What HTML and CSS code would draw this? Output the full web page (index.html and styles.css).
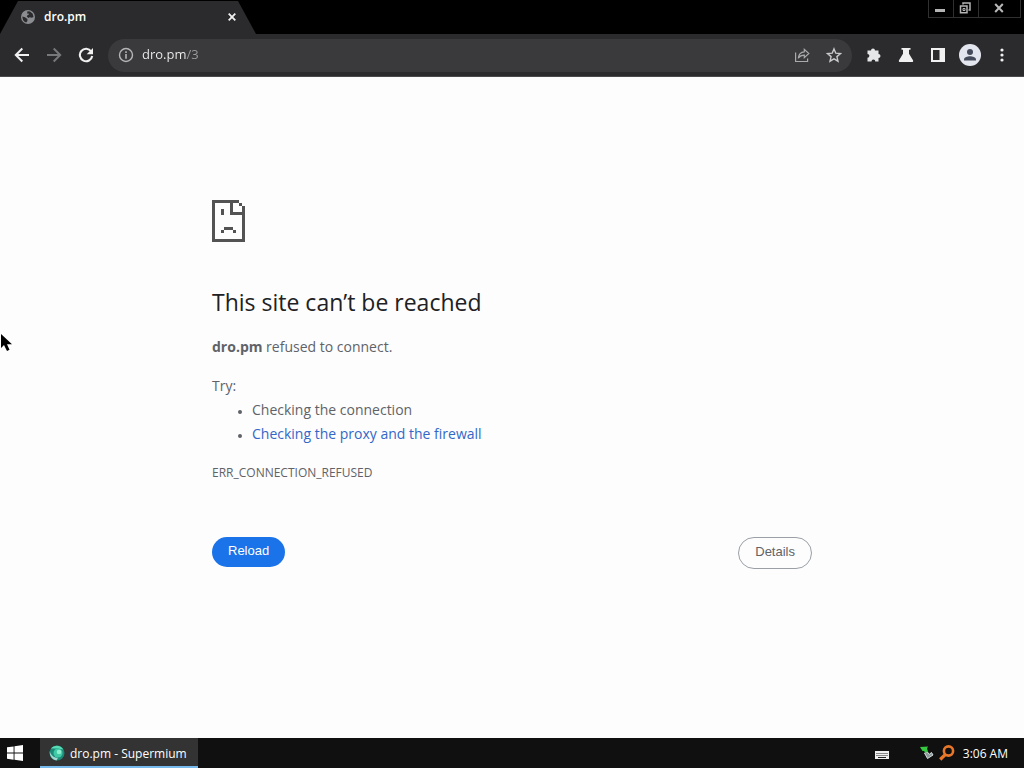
FILE: index.html
```html
<!DOCTYPE html>
<html lang="en">
<head>
    <meta charset="UTF-8">
    <meta name="viewport" content="width=device-width, initial-scale=1.0">
    <title>dro.pm</title>
    <link rel="stylesheet" href="styles.css">
</head>
<body>
    <header class="browser">
        <div class="tab-strip">
            <div class="tab">
                <svg class="tab-icon" width="16" height="16" viewBox="0 0 16 16">
                    <circle cx="8" cy="8" r="7" fill="#8b8d90"/>
                    <path d="M2.4 7.6 5 8.2 7.4 10v2l-1.2 1.6C3.8 13 2.2 10.600 2.400 7.600zM7.500 2.200l2.500.3 2.700 2.200.8 3.300-1.700.8-2-.6L8.400 9 6.800 7.600l.3-1.200 1.600-.6V4.500H7z" fill="#2b2b2d"/>
                </svg>
                <span class="tab-title">dro.pm</span>
                <button class="tab-close" aria-label="Close tab">
                    <svg width="8" height="8" viewBox="0 0 8 8"><path d="M.7.7l6.600 6.600M7.300.7.7 7.300" stroke="#f1f1f1" stroke-width="1.800"/></svg>
                </button>
            </div>
            <div class="window-buttons">
                <button class="window-button" aria-label="Minimize">
                    <svg width="12" height="12" viewBox="0 0 12 12"><path d="M1 7h10v3H1z" fill="#b4b4b4"/></svg>
                </button>
                <button class="window-button" aria-label="Restore">
                    <svg width="12" height="12" viewBox="0 0 12 12" fill="none" stroke="#b4b4b4" stroke-width="1.500"><path d="M4 2.500V1h7v7H9.500"/><path d="M1.500 4h6.500v6.800H1.500z"/><path d="M4 6.500h2v2H4z" stroke-width="1"/></svg>
                </button>
                <button class="window-button window-button-close" aria-label="Close">
                    <svg width="10" height="10" viewBox="0 0 10 10"><path d="M1.200 1l7.600 8M8.800 1 1.200 9" stroke="#b8b8b8" stroke-width="2"/></svg>
                </button>
            </div>
        </div>

        <div class="toolbar">
            <button class="tool" aria-label="Back">
                <svg width="16" height="16" viewBox="0 0 16 16" fill="none" stroke="#f1f1f1" stroke-width="2"><path d="M15 8H2.500M8.300 1.500 1.800 8l6.500 6.500"/></svg>
            </button>
            <button class="tool" aria-label="Forward" disabled>
                <svg width="16" height="16" viewBox="0 0 16 16" fill="none" stroke="#77787a" stroke-width="2"><path d="M1 8h12.500M7.700 1.500 14.200 8l-6.500 6.500"/></svg>
            </button>
            <button class="tool" aria-label="Reload page">
                <svg width="16" height="16" viewBox="0 0 16 16"><path d="M13.200 4.500A6.200 6.200 0 1 0 14.200 9" fill="none" stroke="#f1f1f1" stroke-width="2.100"/><path d="M15 1v6.300H8.700z" fill="#f1f1f1"/></svg>
            </button>
            <form class="address-bar">
                <button type="button" class="site-info" aria-label="View site information">
                    <svg width="16" height="16" viewBox="0 0 16 16"><circle cx="8" cy="8" r="6.500" fill="none" stroke="#b4b5b8" stroke-width="1.400"/><path d="M7.200 4.300h1.600v1.600H7.200zM7.200 7h1.600v4.700H7.200z" fill="#b4b5b8"/></svg>
                </button>
                <input class="address" type="text" value="dro.pm/3" aria-label="Address" spellcheck="false">
                <button type="button" class="tool" aria-label="Share">
                    <svg width="16" height="16" viewBox="0 0 16 16" fill="none" stroke="#a9aaad" stroke-width="1.200"><path d="M1.600 5.500v9h12v-3"/><path d="M4.200 11.200C4.700 7.200 7 5 10.300 4.800V2.300l4.500 4.200-4.500 4.100V8.200C7.400 8.200 5.600 9.200 4.200 11.200z"/></svg>
                </button>
                <button type="button" class="tool" aria-label="Bookmark">
                    <svg width="16" height="16" viewBox="0 0 16 16"><path d="M8 1.900l1.800 4.300 4.700.4-3.600 3 1.100 4.600L8 11.800l-4 2.400 1.100-4.600-3.600-3 4.700-.4z" fill="none" stroke="#c9cacc" stroke-width="1.400"/></svg>
                </button>
            </form>
            <button class="tool" aria-label="Extensions">
                <svg width="16" height="16" viewBox="0 0 16 16"><path d="M1.500 3.500H5a2 2 0 1 1 4 0h3.500V7a2 2 0 1 1 0 4v3.500H9.300a1.900 1.900 0 0 0-3.800 0h-4v-3.800a1.900 1.900 0 0 0 0-3.800z" fill="#e6e7e9"/></svg>
            </button>
            <button class="tool" aria-label="Labs">
                <svg width="16" height="16" viewBox="0 0 16 16"><path d="M3.500 1h9v1.800H11v4l4 6.400c.5.900 0 1.800-1 1.800H2c-1 0-1.500-.9-1-1.800l4-6.400v-4H3.500z" fill="#f1f1f1"/></svg>
            </button>
            <button class="tool" aria-label="Side panel">
                <svg width="16" height="16" viewBox="0 0 16 16"><path d="M1 1h14v14H1zM3 3v10h6.500V3z" fill="#f1f1f1" fill-rule="evenodd"/></svg>
            </button>
            <button class="tool" aria-label="Profile">
                <svg width="22" height="22" viewBox="0 0 22 22"><circle cx="11" cy="11" r="11" fill="#e3e6ee"/><circle cx="11" cy="8" r="3" fill="#454b5a"/><path d="M5 16.500v-1c0-2.200 3.500-3.300 6-3.300s6 1.100 6 3.300v1z" fill="#454b5a"/></svg>
            </button>
            <button class="tool" aria-label="Menu">
                <svg width="16" height="16" viewBox="0 0 16 16" fill="#f1f1f1"><circle cx="8" cy="3" r="1.600"/><circle cx="8" cy="8" r="1.600"/><circle cx="8" cy="13" r="1.600"/></svg>
            </button>
        </div>
    </header>

    <main class="page">
        <div class="error">
            <svg class="error-icon" width="33" height="42" viewBox="0 0 11 14" shape-rendering="crispEdges">
                <path d="M0 0h9v1H7v3h3v1H6V1H1v12h9V2h1v12H0zM9 1h1v1H9zM3 3h1v2H3zM4 9h3v1H4zM3 10h1v1H3zM7 10h1v1H7z" fill="#535353"/>
            </svg>
            <h1>This site can’t be reached</h1>
            <p><strong>dro.pm</strong> refused to connect.</p>
            <div class="suggestions">
                <p>Try:</p>
                <ul>
                    <li>Checking the connection</li>
                    <li><a href="#buttons">Checking the proxy and the firewall</a></li>
                </ul>
            </div>
            <div class="error-code">ERR_CONNECTION_REFUSED</div>
            <div class="buttons" id="buttons">
                <button class="reload-button">Reload</button>
                <button class="details-button">Details</button>
            </div>
        </div>
    </main>

    <footer class="taskbar">
        <button class="start" aria-label="Start">
            <svg width="16" height="16" viewBox="0 0 16 16" fill="#fff"><path d="M0 2.300 6.600 1.400v6.200H0zM7.500 1.200 16 0v7.600H7.500zM0 8.500h6.600v6.200L0 13.800zM7.500 8.500H16V16l-8.500-1.200z"/></svg>
        </button>
        <button class="task">
            <svg width="16" height="16" viewBox="0 0 16 16"><circle cx="8" cy="8" r="7.500" fill="#1c8a79"/><path d="M2 3.500C5-.5 12-.3 14.300 4.500L9 3.500z" fill="#58dcb4"/><circle cx="9" cy="8" r="4.500" fill="#3fc9a4"/><circle cx="10" cy="7" r="2.300" fill="#8ff0cf"/><path d="M.8 6c.7 4 4 7 8.200 6.800l-1.500 2.600C3.500 15 .3 11 .8 6z" fill="#a5d8cf"/></svg>
            <span>dro.pm - Supermium</span>
        </button>
        <div class="tray">
            <svg class="keyboard" width="14" height="8" viewBox="0 0 14 8"><path d="M0 0h14v8H0z" fill="#eee"/><path d="M1.500 2.500h11M1.500 4.500h11" stroke="#222" stroke-dasharray="1 1"/><path d="M3 6.500h8" stroke="#222"/></svg>
            <svg width="14" height="14" viewBox="0 0 14 14"><path d="M4.500 7 7.500 12.500 13 9l-1.500-2.500L9 8.500 7.500 6z" fill="#8e9a9b" stroke="#d5dcdc"/><path d="M0 1l8-.5-1 2L8 5.500 5.500 7 4 5 2.500 5z" fill="#35c840"/></svg>
            <svg width="16" height="16" viewBox="0 0 16 16"><circle cx="9.500" cy="6" r="4.600" fill="none" stroke="#e8772a" stroke-width="2.600"/><path d="M6.500 9.300 1.200 14.500" stroke="#e8772a" stroke-width="3.200"/></svg>
            <time class="clock">3:06 AM</time>
        </div>
    </footer>

    <!-- mouse pointer -->
    <svg class="pointer" width="11" height="19" viewBox="0 0 11 19"><path d="M0 1v14l3-3 3 6 2.500-1.200L6 11.200h5z" fill="#000"/></svg>
</body>
</html>
```
FILE: styles.css
```css
* {
    box-sizing: border-box;
}

body {
    margin: 0;
    min-height: 100vh;
    display: flex;
    flex-direction: column;
    background-color: #fdfdfd;
    color: #5f6368;
    font-family: "Open Sans", "Noto Sans", sans-serif;
    font-size: 14px;
}

button {
    margin: 0;
    padding: 0;
    border: none;
    background: none;
    font-family: inherit;
    cursor: pointer;
}

svg {
    display: block;
    flex-shrink: 0;
}

/* Browser frame */
.browser {
    background-color: #000;
}

.tab-strip {
    display: flex;
    justify-content: space-between;
    align-items: flex-start;
    height: 34px;
}

.tab {
    display: flex;
    align-items: center;
    width: 256px;
    height: 33px;
    margin-top: 1px;
    padding: 0 20px 2px;
    background-color: #2b2b2d;
    clip-path: polygon(18px 0, 238px 0, 256px 100%, 0 100%);
}

.tab-title {
    flex: 1;
    margin-left: 8px;
    color: #fff;
    font-size: 12px;
    font-weight: 600;
}

.tab-close {
    display: flex;
    justify-content: center;
    width: 8px;
}

.window-buttons {
    display: flex;
    margin-right: 3px;
    border: 1px solid #303030;
    border-top: none;
}

.window-button {
    display: flex;
    align-items: center;
    justify-content: center;
    width: 25px;
    height: 17px;
    padding: 0 2px 1px 0;
    border-right: 1px solid #303030;
}

.window-button-close {
    width: 41px;
    border-right: none;
}

.toolbar {
    display: flex;
    align-items: center;
    gap: 8px;
    height: 43px;
    padding: 0 10px;
    background-color: #2b2b2d;
    border-bottom: 1px solid #4a4a4c;
}

.tool {
    display: flex;
    align-items: center;
    justify-content: center;
    width: 24px;
    height: 24px;
}

.address-bar {
    flex: 1;
    display: flex;
    align-items: center;
    gap: 8px;
    height: 33px;
    margin: 0 2px;
    padding: 0 6px 0 10px;
    background-color: #3a3a3c;
    border-radius: 17px;
}

/* host is white, the path after it is grey */
.address {
    flex: 1;
    min-width: 0;
    padding: 0 0 2px;
    border: none;
    outline: none;
    background: linear-gradient(to right, #f1f1f1 44px, #9c9da0 44px);
    -webkit-background-clip: text;
    background-clip: text;
    color: transparent;
    font-family: inherit;
    font-size: 13px;
}

/* Error page */
.page {
    flex: 1;
    padding: 123px 24px 24px;
}

.error {
    max-width: 600px;
    margin: 0 auto;
    line-height: 24px;
}

.error h1 {
    margin: 44px 0 17px;
    color: #202124;
    font-size: 23px;
    font-weight: 400;
    line-height: 32px;
}

.error p {
    margin: 0;
}

.suggestions {
    margin-top: 15px;
}

.suggestions ul {
    margin: 0;
    padding-left: 40px;
}

.suggestions li::marker {
    font-size: 10px;
}

.suggestions a {
    color: #3367c8;
    text-decoration: none;
}

.error-code {
    margin-top: 15px;
    font-size: 12px;
}

.buttons {
    display: flex;
    justify-content: space-between;
    align-items: flex-start;
    margin-top: 52px;
}

.reload-button,
.details-button {
    border-radius: 16px;
    padding: 0 16px 3px;
    font-family: "Liberation Sans", Arial, sans-serif;
    font-size: 13px;
}

.reload-button {
    height: 30px;
    background-color: #1a73e8;
    color: #fff;
}

.details-button {
    height: 32px;
    border: 1px solid #9aa0a6;
    color: #5f6368;
}

/* Taskbar */
.taskbar {
    display: flex;
    align-items: center;
    height: 30px;
    background-color: #101010;
    color: #fff;
    font-size: 12px;
}

.start {
    display: flex;
    justify-content: center;
    width: 30px;
    margin-right: 10px;
}

.task {
    display: flex;
    align-items: center;
    gap: 5px;
    width: 158px;
    height: 30px;
    padding: 2px 9px 0;
    background-color: #333;
    border-bottom: 2px solid #76b9ed;
    color: #fff;
    font-size: 12px;
    white-space: nowrap;
}

.tray {
    display: flex;
    align-items: center;
    gap: 5px;
    margin-left: auto;
    padding-right: 16px;
}

.keyboard {
    margin: 3px 26px 0 0;
}

.clock {
    margin-left: 3px;
}

.pointer {
    position: absolute;
    top: 333px;
    left: 1px;
}
```
